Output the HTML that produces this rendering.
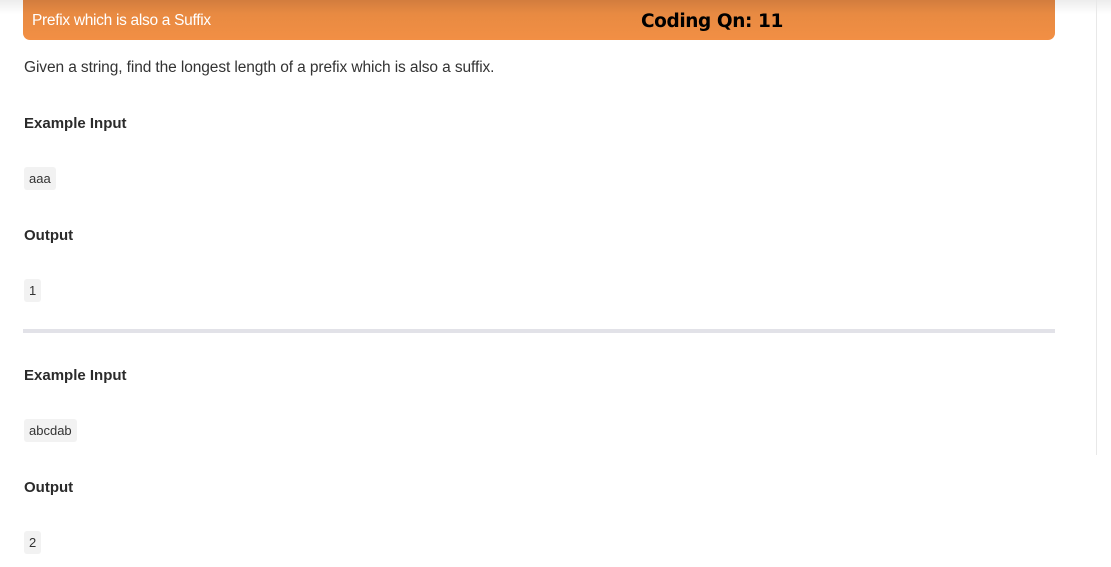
<!DOCTYPE html>
<html><head><style>
body{margin:0;width:1111px;height:567px;background:#fff;font-family:"Liberation Sans",sans-serif;color:#333;position:relative;overflow:hidden}
.topsh{position:absolute;left:0;top:0;width:1111px;height:14px;background:linear-gradient(#ececec,#fff)}
.vl{position:absolute;left:1096px;top:0;width:1px;height:455px;background:#e8e8e8}
.bar{position:absolute;left:23px;top:0;width:1032px;height:40px;border-radius:0 0 7px 7px;background:linear-gradient(#d27c3e,#e88a42 35%,#f28f44)}
.t{position:absolute;left:32px;top:12px;color:#fff;font-size:15.5px;letter-spacing:-0.3px}
.q{position:absolute;left:641px;top:11px;color:#000;font-size:18.5px;font-weight:bold;font-family:"DejaVu Sans",sans-serif;letter-spacing:-0.4px}
.a{position:absolute;left:24px;font-size:15.5px;letter-spacing:-0.1px}
.h{position:absolute;left:24px;font-size:15px;font-weight:bold;color:#2b2b2b}
.c{position:absolute;left:24px;height:23px;line-height:23px;padding:0 5px;background:#f2f2f2;border-radius:3px;font-size:13px;color:#333}
.hr{position:absolute;left:23px;top:329px;width:1032px;height:4px;background:#e2e2e8}
</style></head><body>
<div class="topsh"></div><div class="vl"></div>
<div class="bar"></div>
<div class="t">Prefix which is also a Suffix</div>
<div class="q">Coding Qn: 11</div>
<div class="a" style="top:59px">Given a string, find the longest length of a prefix which is also a suffix.</div>
<div class="h" style="top:115px">Example Input</div>
<div class="c" style="top:167px">aaa</div>
<div class="h" style="top:227px">Output</div>
<div class="c" style="top:279px">1</div>
<div class="hr"></div>
<div class="h" style="top:367px">Example Input</div>
<div class="c" style="top:419px">abcdab</div>
<div class="h" style="top:479px">Output</div>
<div class="c" style="top:531px">2</div>
</body></html>
